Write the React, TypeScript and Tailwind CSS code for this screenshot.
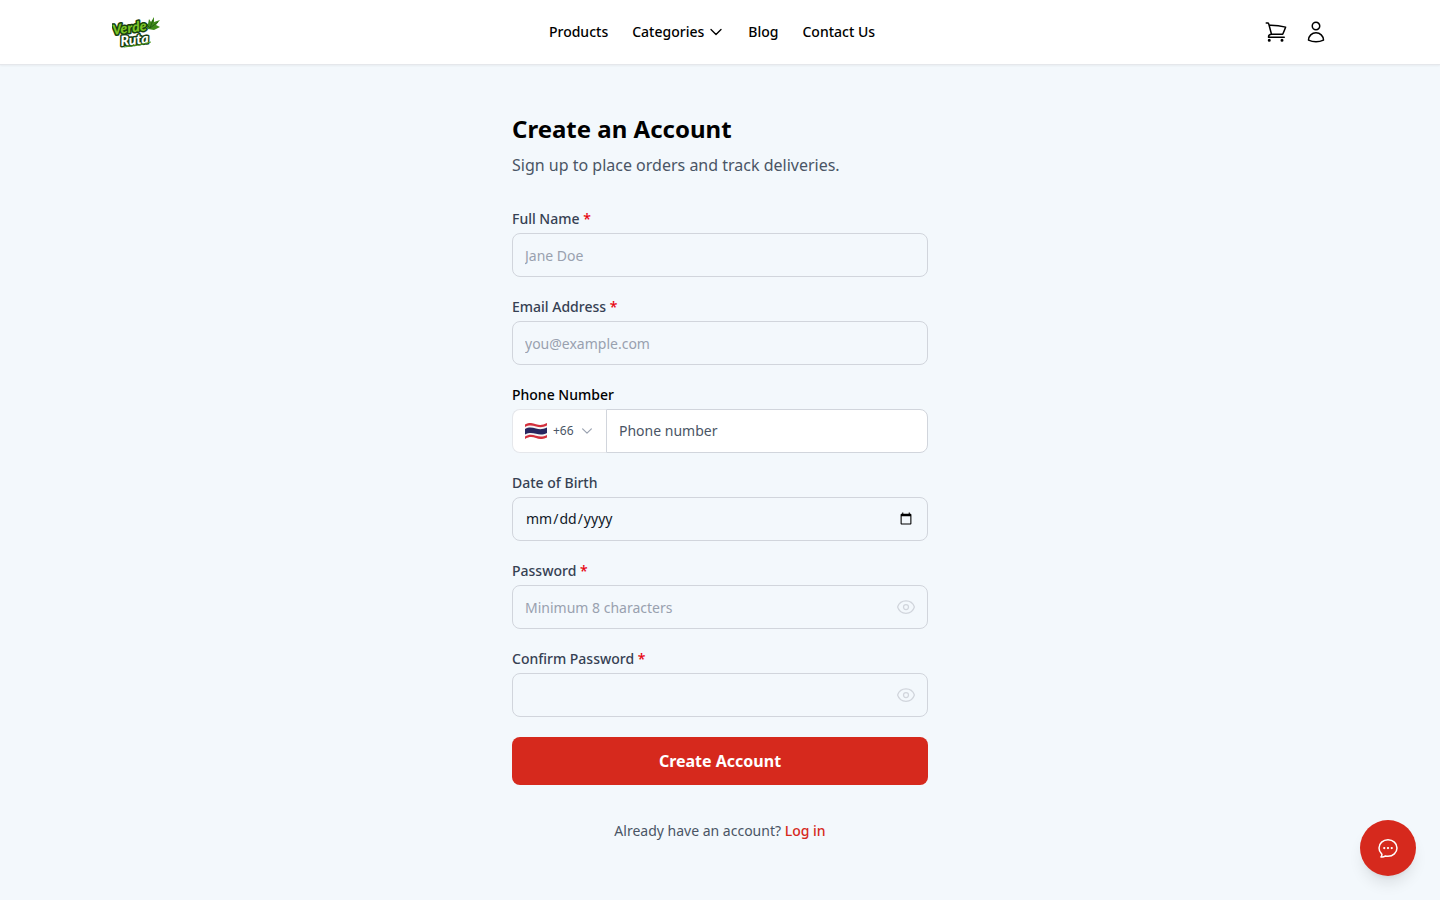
import { useState } from "react";
import type { InputHTMLAttributes } from "react";
import {
  HiOutlineChatBubbleOvalLeftEllipsis,
  HiOutlineChevronDown,
  HiOutlineEye,
  HiOutlineShoppingCart,
  HiOutlineUser,
} from "react-icons/hi2";

const inputClass =
  "h-11 w-full rounded-lg border border-gray-300 bg-transparent px-3 text-sm leading-5 text-gray-900 placeholder:text-gray-400 focus:outline-none focus:ring-2 focus:ring-[#d6291d]";

function Logo() {
  return (
    <svg viewBox="0 0 48 32" className="h-8 w-12" role="img" aria-label="Verde Ruta">
      <path
        d="M36 13 L30 6 L36 8 L37 3 L39 6 L42 1 L42 6 L48 4 L44 9 L48 11 L42 14 Z"
        fill="#3f8a1a"
      />
      <path d="M38 12 L41 4 M38 12 L46 6 M38 12 L33 7" stroke="#1d5412" strokeWidth="0.8" />
      <g
        fontFamily="Lato, sans-serif"
        fontStyle="italic"
        fontWeight="900"
        stroke="#17400f"
        strokeLinejoin="round"
        paintOrder="stroke"
      >
        <text x="1" y="19" fontSize="14" fill="#7cc424" strokeWidth="3" transform="rotate(-8 1 19)">
          Verde
        </text>
        <text x="9" y="30" fontSize="14" fill="#ffffff" strokeWidth="3" transform="rotate(-6 9 30)">
          Ruta
        </text>
      </g>
      <path d="M12 31 Q26 30 39 26" stroke="#4c9a1c" strokeWidth="1" fill="none" />
    </svg>
  );
}

function ThaiFlag() {
  return (
    <svg viewBox="0 0 22 16" className="h-4 w-[22px] shrink-0" aria-hidden="true">
      <path d="M0 1.5 C4 -1 7 0 11 1.2 C15 2.4 18 2 22 0 V14.5 C18 16.5 15 16.4 11 15 C7 13.6 4 13.6 0 16 Z" fill="#f5f5f5" />
      <path d="M0 1.5 C4 -1 7 0 11 1.2 C15 2.4 18 2 22 0 V2.5 C18 4.5 15 4.6 11 3.5 C7 2.4 4 1.8 0 4 Z" fill="#d32f3c" />
      <path d="M0 6 C4 3.8 7 4.4 11 5.6 C15 6.8 18 6.4 22 4.6 V10 C18 12 15 12 11 10.8 C7 9.6 4 9.4 0 11.5 Z" fill="#28265f" />
      <path d="M0 13.5 C4 11.2 7 11.6 11 12.8 C15 14 18 14 22 12 V14.5 C18 16.5 15 16.4 11 15 C7 13.6 4 13.6 0 16 Z" fill="#d32f3c" />
    </svg>
  );
}

function Header() {
  return (
    <header className="border-b border-gray-200 bg-white shadow-xs">
      <div className="mx-auto flex h-16 max-w-7xl items-center justify-between px-8">
        <a href="#">
          <Logo />
        </a>
        <nav className="flex items-center gap-6 text-sm font-medium text-black">
          <a href="#">Products</a>
          <button type="button" className="flex items-center gap-1">
            Categories
            <HiOutlineChevronDown className="h-4 w-4" strokeWidth={2} />
          </button>
          <a href="#">Blog</a>
          <a href="#">Contact Us</a>
        </nav>
        <div className="flex items-center gap-4 text-black">
          <button type="button" aria-label="Cart">
            <HiOutlineShoppingCart className="h-6 w-6" />
          </button>
          <button type="button" aria-label="Account">
            <HiOutlineUser className="h-6 w-6" />
          </button>
        </div>
      </div>
    </header>
  );
}

type FieldProps = InputHTMLAttributes<HTMLInputElement> & {
  id: string;
  label: string;
};

function Label({ id, label, required }: { id: string; label: string; required?: boolean }) {
  return (
    <label htmlFor={id} className="mb-1 block text-sm leading-5 font-medium text-gray-700">
      {label} {required && <span className="text-red-600">*</span>}
    </label>
  );
}

function Field({ id, label, required, ...props }: FieldProps) {
  return (
    <div className="flex flex-col">
      <Label id={id} label={label} required={required} />
      <input id={id} className={inputClass} {...props} />
    </div>
  );
}

function PasswordField({ id, label, ...props }: FieldProps) {
  const [visible, setVisible] = useState(false);

  return (
    <div>
      <Label id={id} label={label} required />
      <div className="relative flex">
        <input id={id} type={visible ? "text" : "password"} className={inputClass} {...props} />
        <button
          type="button"
          aria-label="Toggle password visibility"
          onClick={() => setVisible(!visible)}
          className="absolute inset-y-0 right-3 text-gray-300"
        >
          <HiOutlineEye className="h-5 w-5" />
        </button>
      </div>
    </div>
  );
}

function PhoneField() {
  return (
    <div>
      <label htmlFor="phone" className="mb-1 block text-sm leading-5 font-medium text-black">
        Phone Number
      </label>
      <div className="flex h-11">
        <div className="flex items-center gap-1.5 rounded-l-lg border border-r-0 border-gray-200 bg-white px-3">
          <ThaiFlag />
          <select aria-label="Country code" className="appearance-none bg-transparent text-xs text-gray-600">
            <option>+66</option>
          </select>
          <HiOutlineChevronDown className="h-3.5 w-3.5 text-gray-400" strokeWidth={2} />
        </div>
        <input
          id="phone"
          type="tel"
          placeholder="Phone number"
          className="min-w-0 flex-1 rounded-r-lg border border-gray-300 bg-white px-3 text-sm leading-5 text-gray-900 placeholder:text-gray-600 focus:outline-none"
        />
      </div>
    </div>
  );
}

export default function App() {
  return (
    <div className="min-h-screen bg-[#f3f8fc] font-['Noto_Sans',sans-serif]">
      <Header />

      <main className="mx-auto max-w-md px-4 py-12">
        <h1 className="text-2xl leading-8 font-bold text-black">Create an Account</h1>
        <p className="mt-2 text-base leading-6 text-gray-600">Sign up to place orders and track deliveries.</p>

        <form className="mt-8 space-y-5" onSubmit={(e) => e.preventDefault()}>
          <Field id="name" label="Full Name" required placeholder="Jane Doe" />
          <Field id="email" label="Email Address" required type="email" placeholder="you@example.com" />
          <PhoneField />
          <Field id="dob" label="Date of Birth" type="date" />
          <PasswordField id="password" label="Password" placeholder="Minimum 8 characters" />
          <PasswordField id="confirm" label="Confirm Password" />
          <button type="submit" className="h-12 w-full rounded-lg bg-[#d6291d] text-base font-bold text-white">
            Create Account
          </button>
        </form>

        <p className="mt-9 text-center text-sm leading-5 text-gray-600">
          Already have an account?{" "}
          <a href="#" className="font-medium text-[#d6291d]">
            Log in
          </a>
        </p>
      </main>

      <button
        type="button"
        aria-label="Open chat"
        className="fixed right-6 bottom-6 flex h-14 w-14 items-center justify-center rounded-full bg-[#d6291d] text-white shadow-lg"
      >
        <HiOutlineChatBubbleOvalLeftEllipsis className="h-6 w-6" />
      </button>
    </div>
  );
}
